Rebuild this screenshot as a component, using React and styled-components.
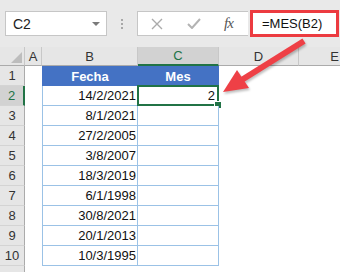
import React from 'react';
import styled, { createGlobalStyle } from 'styled-components';

const GlobalStyle = createGlobalStyle`
  body {
    margin: 0;
    background: #fff;
    font-family: "Liberation Sans", Arial, sans-serif;
  }
  * { box-sizing: border-box; }
`

const Page = styled.div`
  position: relative;
  width: 340px;
  height: 272px;
  overflow: hidden;
  background: #fff;
`

const Toolbar = styled.div`
  display: flex;
  align-items: flex-start;
  height: 47px;
  padding: 11px 0 0 5px;
  background: #e9e9e9;
`

const NameBox = styled.div`
  display: flex;
  align-items: center;
  justify-content: space-between;
  width: 102px;
  height: 25px;
  padding: 0 6px 0 7px;
  background: #fff;
  border: 1px solid #c6c6c6;
  font-size: 14px;
  color: #222;
`

const DropArrow = styled.span`
  width: 0;
  height: 0;
  border-left: 4px solid transparent;
  border-right: 4px solid transparent;
  border-top: 4px solid #7a7a7a;
`

const Dots = styled.div`
  display: flex;
  flex-direction: column;
  align-items: center;
  justify-content: center;
  gap: 2px;
  width: 30px;
  height: 25px;
  span {
    width: 2px;
    height: 2px;
    background: #a8a8a8;
  }
`

const FormulaBox = styled.div`
  display: flex;
  align-items: center;
  width: 111px;
  height: 25px;
  padding-left: 13px;
  background: #fff;
  border: 1px solid #c6c6c6;
  border-right: none;
`

const IconSlot = styled.span`
  display: flex;
  align-items: center;
  margin-right: ${p => p.$gap}px;
`

const Fx = styled.span`
  font-family: "Liberation Serif", serif;
  font-style: italic;
  font-size: 15px;
  color: #555;
  letter-spacing: -1px;
`

const FormulaInput = styled.div`
  display: flex;
  align-items: center;
  width: 89px;
  height: 27px;
  margin: -1px 0 0 2px;
  padding-left: 9px;
  background: #fff;
  border: 3px solid #ec3b40;
  font-size: 13px;
  color: #111;
`

const Sheet = styled.div`
  display: grid;
  grid-template-columns: 25px 17px 96px 81px 80px 72px;
  grid-template-rows: 19px repeat(11, 20px);
  font-size: 13px;
`

const ColHead = styled.div`
  display: flex;
  align-items: center;
  justify-content: center;
  background: ${p => (p.$active ? '#d2d2d2' : '#e6e6e6')};
  color: ${p => (p.$active ? '#217346' : '#333')};
  border-right: 1px solid #c8c8c8;
  border-bottom: ${p => (p.$active ? '2px solid #217346' : '1px solid #ababab')};
`

const Corner = styled(ColHead)`
  align-items: flex-end;
  justify-content: flex-end;
  padding: 0 2px 2px 0;
`

const Triangle = styled.span`
  width: 11px;
  height: 11px;
  background: #bdbdbd;
  clip-path: polygon(100% 0, 100% 100%, 0 100%);
`

const RowHead = styled.div`
  display: flex;
  align-items: center;
  justify-content: center;
  background: ${p => (p.$active ? '#d2d2d2' : '#e6e6e6')};
  color: ${p => (p.$active ? '#217346' : '#333')};
  border-bottom: 1px solid #d4d4d4;
  border-right: ${p => (p.$active ? '2px solid #217346' : '1px solid #ababab')};
`

const Blank = styled.div`
  background: #fff;
`

const TableHead = styled.div`
  display: flex;
  align-items: center;
  justify-content: center;
  background: #4472c4;
  color: #fff;
  font-weight: bold;
  border-left: ${p => (p.$first ? '1px solid #4472c4' : 'none')};
  border-right: 1px solid #4472c4;
`

const TableCell = styled.div`
  position: relative;
  display: flex;
  align-items: center;
  justify-content: flex-end;
  padding-right: ${p => (p.$selected ? 3 : 1)}px;
  background: #fff;
  color: #111;
  border-bottom: 1px solid #9bc2e6;
  border-right: 1px solid #9bc2e6;
  border-left: ${p => (p.$first ? '1px solid #9bc2e6' : 'none')};

  ${p => p.$selected && `
    &::before {
      content: '';
      position: absolute;
      left: -1px;
      top: -1px;
      right: -1px;
      bottom: -1px;
      border: 2px solid #217346;
    }
    &::after {
      content: '';
      position: absolute;
      right: -4px;
      bottom: -4px;
      width: 6px;
      height: 6px;
      background: #217346;
      border: 1px solid #fff;
    }
  `}
`

const Arrow = styled.svg`
  position: absolute;
  left: 0;
  top: 0;
  pointer-events: none;
  filter: drop-shadow(1px 2px 1px rgba(0, 0, 0, 0.25));
`

const dates = [
  '14/2/2021', '8/1/2021', '27/2/2005', '3/8/2007', '18/3/2019',
  '6/1/1998', '30/8/2021', '20/1/2013', '10/3/1995',
]

export default function App() {
  return (
    <Page>
      <GlobalStyle />
      <Toolbar>
        <NameBox>
          C2
          <DropArrow />
        </NameBox>
        <Dots>
          <span />
          <span />
          <span />
        </Dots>
        <FormulaBox>
          <IconSlot $gap={24}>
            <svg width="12" height="12" viewBox="0 0 12 12">
              <path d="M1 1 L11 11 M11 1 L1 11" stroke="#ababab" strokeWidth="1.4" fill="none" />
            </svg>
          </IconSlot>
          <IconSlot $gap={23}>
            <svg width="14" height="11" viewBox="0 0 14 11">
              <path d="M1 6 L5 10 L13 1" stroke="#b3b3b3" strokeWidth="2" fill="none" />
            </svg>
          </IconSlot>
          <Fx>fx</Fx>
        </FormulaBox>
        <FormulaInput>=MES(B2)</FormulaInput>
      </Toolbar>

      <Sheet>
        <Corner><Triangle /></Corner>
        <ColHead>A</ColHead>
        <ColHead>B</ColHead>
        <ColHead $active>C</ColHead>
        <ColHead>D</ColHead>
        <ColHead>E</ColHead>

        <RowHead>1</RowHead>
        <Blank />
        <TableHead $first>Fecha</TableHead>
        <TableHead>Mes</TableHead>
        <Blank />
        <Blank />

        {dates.map((d, i) => (
          <React.Fragment key={d}>
            <RowHead $active={i === 0}>{i + 2}</RowHead>
            <Blank />
            <TableCell $first>{d}</TableCell>
            <TableCell $selected={i === 0}>{i === 0 ? '2' : ''}</TableCell>
            <Blank />
            <Blank />
          </React.Fragment>
        ))}

        <RowHead />
        <Blank />
        <Blank />
        <Blank />
        <Blank />
        <Blank />
      </Sheet>

      <Arrow width="340" height="272" viewBox="0 0 340 272">
        <line x1="304" y1="41" x2="240" y2="81" stroke="#ee4046" strokeWidth="6" />
        <polygon points="223,92 237,70 249,88" fill="#ee4046" />
      </Arrow>
    </Page>
  );
}
